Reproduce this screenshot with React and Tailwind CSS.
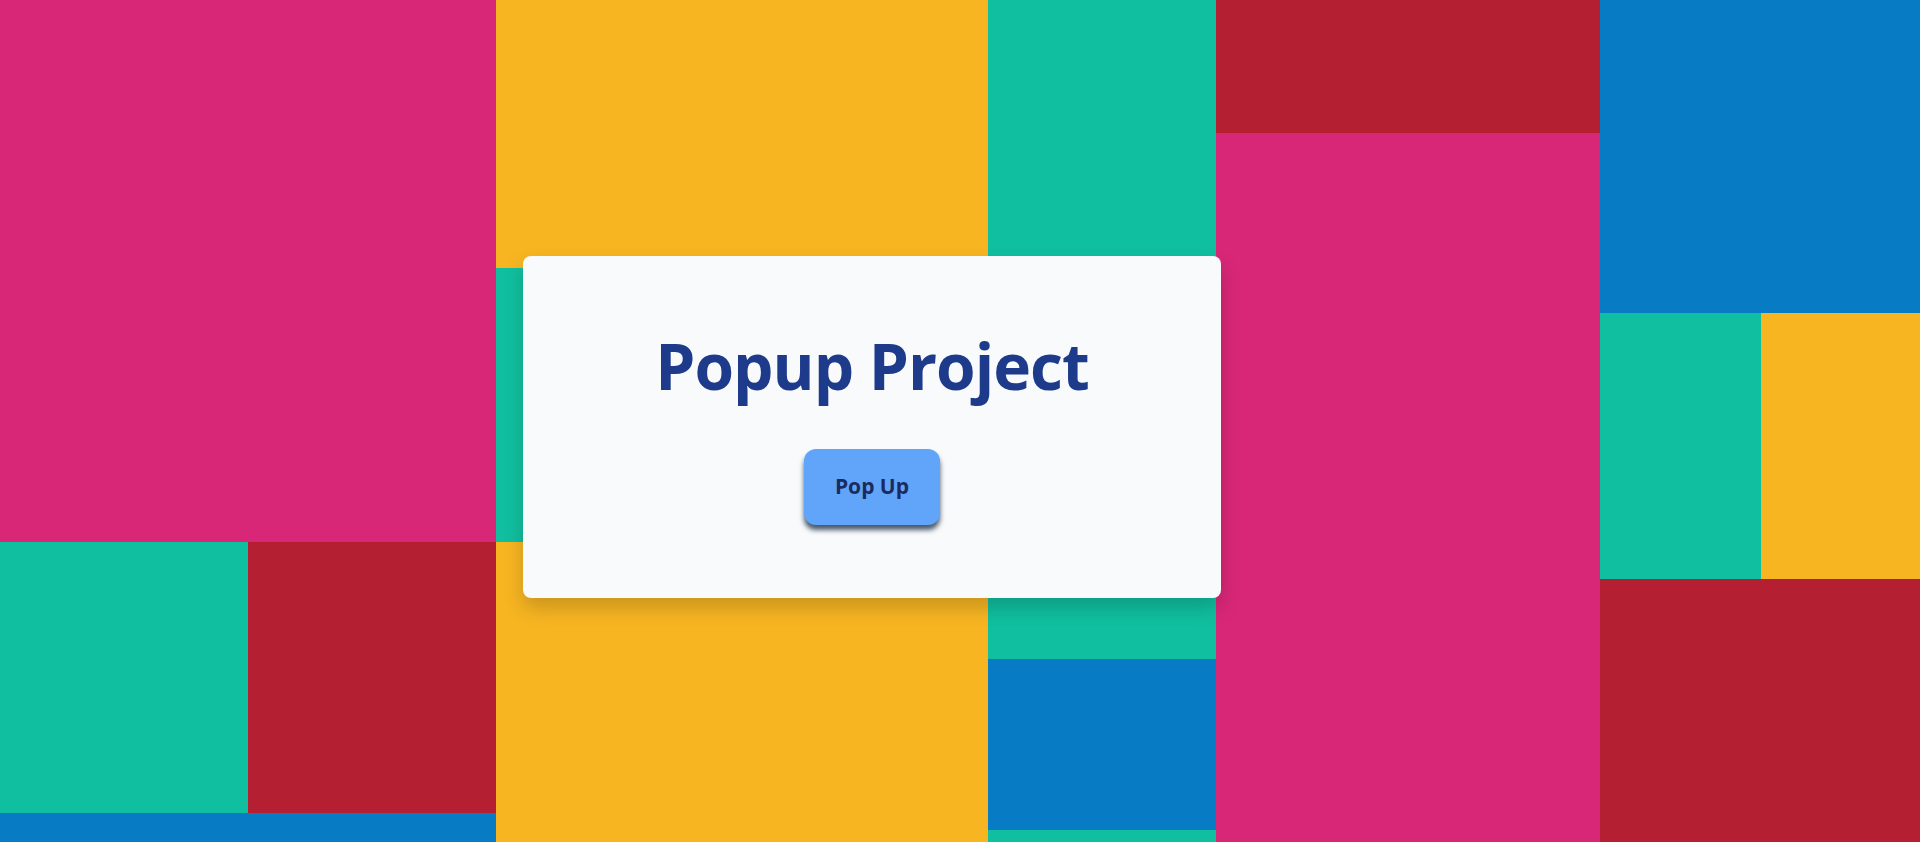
import React from "react";

export default function App() {
  return (
    <div className="relative w-[1920px] h-[842px] overflow-hidden" style={{ fontFamily: '"Open Sans", "Noto Sans", sans-serif' }}>
      <div className="flex h-full w-full">
        {/* Column 1 */}
        <div className="flex flex-col w-[496px] h-full">
          <div className="h-[542px] bg-[#d82777]" />
          <div className="flex h-[271px]">
            <div className="w-[248px] bg-[#10bf9f]" />
            <div className="flex-1 bg-[#b41f31]" />
          </div>
          <div className="flex-1 bg-[#087bc5]" />
        </div>
        {/* Column 2 */}
        <div className="flex flex-col w-[492px] h-full">
          <div className="h-[268px] bg-[#f7b522]" />
          <div className="h-[274px] bg-[#10bf9f]" />
          <div className="flex-1 bg-[#f7b522]" />
        </div>
        {/* Column 3 */}
        <div className="flex flex-col w-[228px] h-full">
          <div className="h-[659px] bg-[#10bf9f]" />
          <div className="h-[171px] bg-[#087bc5]" />
          <div className="flex-1 bg-[#10bf9f]" />
        </div>
        {/* Column 4 */}
        <div className="flex flex-col w-[384px] h-full">
          <div className="h-[133px] bg-[#b41f31]" />
          <div className="flex-1 bg-[#d82777]" />
        </div>
        {/* Column 5 */}
        <div className="flex flex-col flex-1 h-full">
          <div className="h-[313px] bg-[#087bc5]" />
          <div className="flex h-[266px]">
            <div className="w-[161px] bg-[#10bf9f]" />
            <div className="flex-1 bg-[#f7b522]" />
          </div>
          <div className="flex-1 bg-[#b41f31]" />
        </div>
      </div>

      {/* Popup card overlay */}
      <div className="absolute inset-0 flex items-center justify-center pr-[176px] pt-[12px]">
        <div className="w-[698px] h-[342px] bg-[#f8fafc] rounded-[8px] shadow-[0_10px_20px_rgba(0,0,0,0.18)] flex flex-col items-center pt-[78px]">
          <h1 className="text-[64px] leading-none font-bold text-[#1e3a8a] tracking-[-1px]">Popup Project</h1>
          <button className="mt-[51px] w-[136px] h-[76px] rounded-[12px] bg-[#60a5fa] text-[21px] font-bold text-[#1c2b5e] shadow-[0_5px_5px_rgba(15,35,55,0.75)] flex items-center justify-center">
            Pop Up
          </button>
        </div>
      </div>
    </div>
  );
}
